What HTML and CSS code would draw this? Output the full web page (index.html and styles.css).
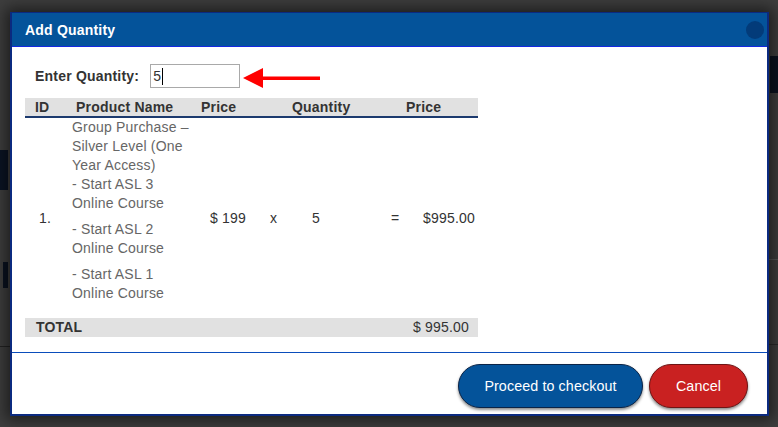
FILE: index.html
```html
<!DOCTYPE html>
<html lang="en">
<head>
<meta charset="utf-8">
<title>Add Quantity</title>
<link rel="stylesheet" href="styles.css">
</head>
<body>
<div class="modal">
  <div class="modal-header">
    <span class="title">Add Quantity</span>
    <span class="close"></span>
  </div>
  <div class="modal-body">
    <div class="qty-row">
      <span class="qty-label">Enter Quantity:</span>
      <div class="qty-input"><span>5</span><span class="caret"></span></div>
      <svg class="arrow" width="78" height="22" viewBox="0 0 78 22">
        <polygon points="0,11 20,1 20,21" fill="#f00"/>
        <rect x="18" y="9.5" width="59" height="3.5" fill="#f00"/>
      </svg>
    </div>
    <div class="table">
      <div class="thead">
        <span>ID</span>
        <span>Product Name</span>
        <span>Price</span>
        <span>Quantity</span>
        <span>Price</span>
      </div>
      <div class="trow">
        <span>1.</span>
        <div class="product">
          <p>Group Purchase – Silver Level (One Year Access)<br>- Start ASL 3 Online Course</p>
          <p>- Start ASL 2 Online Course</p>
          <p>- Start ASL 1 Online Course</p>
        </div>
        <span>$ 199</span>
        <span>x</span>
        <span>5</span>
        <span>=</span>
        <span>$995.00</span>
      </div>
      <div class="total">
        <b>TOTAL</b>
        <span>$ 995.00</span>
      </div>
    </div>
  </div>
  <div class="modal-footer">
    <button class="btn btn-primary">Proceed to checkout</button>
    <button class="btn btn-cancel">Cancel</button>
  </div>
</div>
</body>
</html>
```
FILE: styles.css
```css
html, body {
  margin: 0;
  height: 100%;
}

body {
  box-sizing: border-box;
  padding: 12px 0 0 10px;
  overflow: hidden;
  font-family: "Liberation Sans", Arial, sans-serif;
  letter-spacing: 0.2px;
  background-color: #3e3e3e;
  background-image:
    linear-gradient(#0b1424, #0b1424),
    linear-gradient(#0a1220, #0a1220),
    linear-gradient(#222, #222),
    linear-gradient(#0a1220, #0a1220),
    linear-gradient(#555, #555),
    linear-gradient(#2a2a2a, #2a2a2a);
  background-repeat: no-repeat;
  background-position:
    0 150px,
    3px 262px,
    0 346px,
    770px 56px,
    769px 259px,
    769px 344px;
  background-size:
    8px 40px,
    5px 26px,
    10px 1px,
    8px 37px,
    9px 1px,
    9px 1px;
}

.modal {
  width: 759px;
  height: 404px;
  box-sizing: border-box;
  border: 2px solid #0b2a80;
  border-top-width: 1px;
  background: #fff;
  display: flex;
  flex-direction: column;
  box-shadow: 0 0 14px 4px rgba(0, 0, 0, 0.55);
}

.modal-header {
  height: 34px;
  box-sizing: border-box;
  background: #04539a;
  border-bottom: 1px solid #1428e0;
  display: flex;
  align-items: center;
  justify-content: space-between;
  padding: 0 3px 0 13px;
}

.title {
  color: #fff;
  font-weight: bold;
  font-size: 14px;
}

.close {
  width: 18px;
  height: 18px;
  border-radius: 50%;
  background: #033b79;
}

.modal-body {
  flex: 1;
  padding: 17px 13px 0;
}

.qty-row {
  display: flex;
  align-items: center;
  height: 24px;
  padding-left: 10px;
}

.qty-label {
  font-weight: bold;
  font-size: 14px;
  color: #333;
  margin-right: 11px;
}

.qty-input {
  width: 90px;
  height: 24px;
  box-sizing: border-box;
  border: 1px solid #a9a9a9;
  font-size: 14px;
  color: #333;
  padding-left: 2px;
  display: flex;
  align-items: center;
}

.caret {
  width: 1px;
  height: 17px;
  background: #000;
  margin-left: 1px;
}

.arrow {
  margin-left: 3px;
  margin-top: 4px;
  display: block;
}

.table {
  width: 453px;
  margin-top: 10px;
}

.thead {
  display: grid;
  grid-template-columns: 41px 125px 91px 114px 82px;
  height: 20px;
  box-sizing: border-box;
  background: #e1e1e1;
  border-bottom: 2px solid #1c3a6e;
  font-weight: bold;
  font-size: 14px;
  color: #333;
  line-height: 18px;
}

.thead span {
  padding-left: 10px;
}

.trow {
  display: grid;
  grid-template-columns: 33px 138px 60px 42px 79px 32px 55px;
  padding-left: 14px;
  font-size: 14px;
  color: #333;
  line-height: 19px;
}

.trow > span {
  align-self: center;
}

.product {
  color: #666;
  padding: 0 15px 15px 0;
}

.product p {
  margin: 0 0 7px;
}

.product p:last-child {
  margin-bottom: 0;
}

.total {
  display: flex;
  justify-content: space-between;
  height: 19px;
  background: #e1e1e1;
  padding: 0 9px 0 11px;
  font-size: 14px;
  color: #333;
  line-height: 19px;
}

.modal-footer {
  height: 62px;
  box-sizing: border-box;
  border-top: 1px solid #0a4dbb;
  display: flex;
  justify-content: flex-end;
  align-items: flex-start;
  gap: 6px;
  padding: 11px 19px 0 0;
}

.btn {
  height: 44px;
  box-sizing: border-box;
  border-radius: 22px;
  padding: 0;
  font-family: inherit;
  font-size: 14.3px;
  letter-spacing: 0.1px;
  color: #fff;
  border: 1px solid;
  box-shadow: 0 2px 3px rgba(0, 0, 0, 0.45);
}

.btn-primary {
  width: 185px;
  background: #04539a;
  border-color: #0b2447;
}

.btn-cancel {
  width: 99px;
  background: #c92121;
  border-color: #6e1414;
}
```
